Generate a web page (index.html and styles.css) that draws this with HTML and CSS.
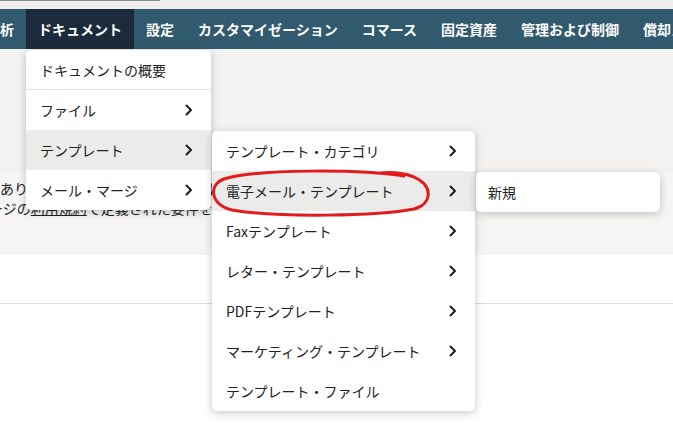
FILE: index.html
```html
<!DOCTYPE html>
<html lang="ja">
<head>
<meta charset="utf-8">
<link rel="stylesheet" href="styles.css">
</head>
<body>
<div class="topstrip"><div class="thumb"></div></div>
<nav class="nav">
  <span class="nav-item">分析</span>
  <span class="nav-item active">ドキュメント</span>
  <span class="nav-item">設定</span>
  <span class="nav-item">カスタマイゼーション</span>
  <span class="nav-item">コマース</span>
  <span class="nav-item">固定資産</span>
  <span class="nav-item">管理および制御</span>
  <span class="nav-item">償却スケジュール</span>
</nav>
<main class="content">
  <div class="hero"></div>
  <div class="notice">
    <p class="line line1">あります。このサイトを使用するには</p>
    <p class="line line2">このページの<a class="link" href="#">利用規約</a>で定義された要件を満たす必要があります。</p>
  </div>
  <div class="band"></div>
</main>

<div class="menu menu1">
  <div class="mi first"><span>ドキュメントの概要</span></div>
  <div class="mi"><span>ファイル</span><svg class="chev" width="8" height="12" viewBox="0 0 8 12"><polyline points="1.5,1.5 6,6 1.5,10.5"/></svg></div>
  <div class="mi hl"><span>テンプレート</span><svg class="chev" width="8" height="12" viewBox="0 0 8 12"><polyline points="1.5,1.5 6,6 1.5,10.5"/></svg></div>
  <div class="mi"><span>メール・マージ</span><svg class="chev" width="8" height="12" viewBox="0 0 8 12"><polyline points="1.5,1.5 6,6 1.5,10.5"/></svg></div>
</div>

<div class="menu menu2">
  <div class="mi"><span>テンプレート・カテゴリ</span><svg class="chev" width="8" height="12" viewBox="0 0 8 12"><polyline points="1.5,1.5 6,6 1.5,10.5"/></svg></div>
  <div class="mi hl"><span>電子メール・テンプレート</span><svg class="chev" width="8" height="12" viewBox="0 0 8 12"><polyline points="1.5,1.5 6,6 1.5,10.5"/></svg></div>
  <div class="mi"><span>Faxテンプレート</span><svg class="chev" width="8" height="12" viewBox="0 0 8 12"><polyline points="1.5,1.5 6,6 1.5,10.5"/></svg></div>
  <div class="mi"><span>レター・テンプレート</span><svg class="chev" width="8" height="12" viewBox="0 0 8 12"><polyline points="1.5,1.5 6,6 1.5,10.5"/></svg></div>
  <div class="mi"><span>PDFテンプレート</span><svg class="chev" width="8" height="12" viewBox="0 0 8 12"><polyline points="1.5,1.5 6,6 1.5,10.5"/></svg></div>
  <div class="mi"><span>マーケティング・テンプレート</span><svg class="chev" width="8" height="12" viewBox="0 0 8 12"><polyline points="1.5,1.5 6,6 1.5,10.5"/></svg></div>
  <div class="mi"><span>テンプレート・ファイル</span></div>
</div>

<div class="menu menu3">
  <div class="mi"><span>新規</span></div>
</div>

<svg class="annot" width="230" height="56" viewBox="0 0 230 56">
  <path d="M196 10 C150 3, 50 3, 16 13 C0 19, 2 38, 24 44 C70 52, 170 50, 206 43 C224 38, 226 20, 206 11 C196 7, 182 6, 172 7"/>
</svg>
</body>
</html>
```

FILE: styles.css
```css
html, body {
  margin: 0;
  padding: 0;
}
body {
  width: 673px;
  height: 438px;
  overflow: hidden;
  position: relative;
  background: #ffffff;
  font-family: "Noto Sans CJK JP", "Noto Sans", sans-serif;
  color: #222;
}
.topstrip {
  height: 9px;
  background: #f0efed;
}
.thumb {
  width: 160px;
  height: 1px;
  background: #8a8a8a;
}
.nav {
  display: flex;
  height: 40px;
  margin-left: -26px;
  background: #325a6e;
  white-space: nowrap;
  overflow: hidden;
}
.nav-item {
  display: flex;
  align-items: center;
  padding: 0 12px;
  font-size: 14px;
  line-height: 20px;
  font-weight: 700;
  color: #ffffff;
  flex: none;
}
.nav-item.active {
  background: #1b2b3b;
}
.content {
  display: flex;
  flex-direction: column;
}
.hero {
  height: 123px;
  background: #f3f2f0;
}
.notice {
  height: 83px;
  background: #f6f5f3;
  padding-top: 6px;
  box-sizing: border-box;
  overflow: hidden;
}
.line {
  margin: 0;
  font-size: 14px;
  line-height: 20px;
  color: #222;
  white-space: nowrap;
}
.line1 {
  padding-left: 0;
}
.line2 {
  margin-left: -53px;
}
.link {
  color: #222;
  text-decoration: underline;
}
.band {
  height: 48px;
  border-bottom: 1px solid #dcdcdc;
}
.menu {
  position: absolute;
  background: #ffffff;
  border-radius: 5px;
  box-shadow: 0 2px 8px rgba(0, 0, 0, 0.22);
  overflow: hidden;
}
.menu1 {
  left: 26px;
  top: 50px;
  width: 185px;
}
.menu2 {
  left: 212px;
  top: 131px;
  width: 263px;
}
.menu3 {
  left: 476px;
  top: 172px;
  width: 184px;
}
.mi {
  height: 40px;
  display: flex;
  align-items: center;
  justify-content: space-between;
  padding: 0 18px 0 14px;
  font-size: 14px;
  color: #222;
  white-space: nowrap;
}
.menu3 .mi {
  padding-left: 12px;
}
.mi.first {
  height: 39px;
  border-bottom: 1px solid #e4e4e4;
}
.mi.hl {
  background: #ebebe9;
}
.chev polyline {
  fill: none;
  stroke: #1e1e1e;
  stroke-width: 2;
  stroke-linecap: round;
  stroke-linejoin: round;
}
.annot {
  position: absolute;
  left: 208px;
  top: 166px;
}
.annot path {
  fill: none;
  stroke: #e31b1d;
  stroke-width: 3;
  stroke-linecap: round;
}
```
